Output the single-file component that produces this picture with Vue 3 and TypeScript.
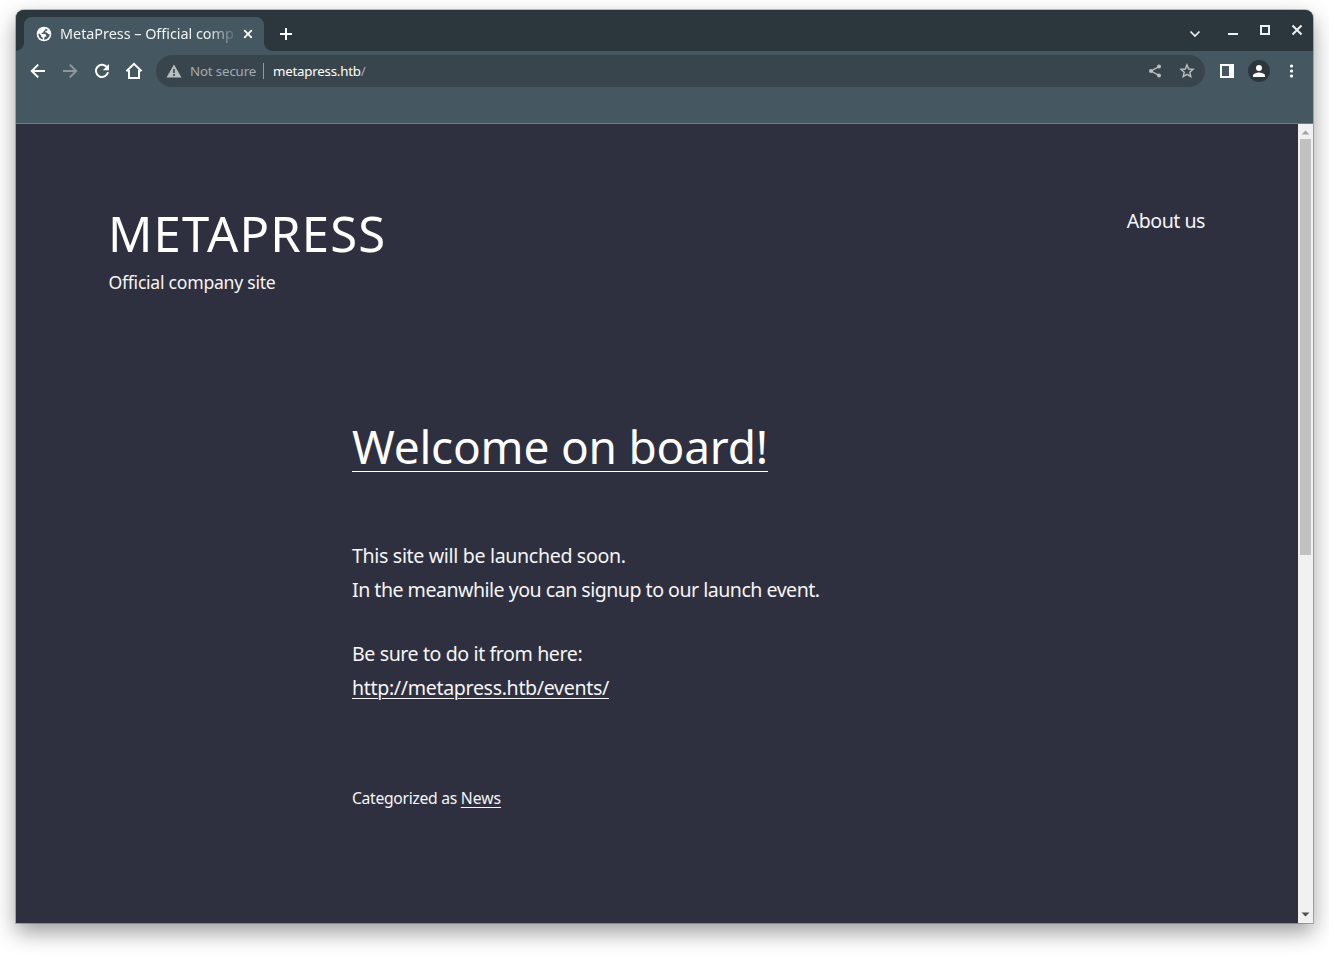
<script setup lang="ts">
import { ref } from 'vue'

const tabTitle = ref('MetaPress – Official comp')
</script>

<template>
  <div class="desktop">
    <div class="window">
      <header class="tabs">
        <div class="tab">
          <svg class="globe" width="16" height="16" viewBox="0 0 16 16">
            <circle cx="8" cy="8" r="7.3" fill="#fff" />
            <path d="M9.4 2.4V3.9L7.6 4.9V6.3L5.6 6.9V8.1H9.2L10.2 9.3V10.7H8.6L8 13.7C11 13.7 13.7 11.2 13.7 8L12.4 8.2 10.8 6.5H9.4V5.1L11.4 4.6V3.6ZM2.3 7.8C2.3 10.9 4 12.9 6.8 13.6V11.8L5.2 10.8V9.4L3.2 7.6Z" fill="#455760" />
          </svg>
          <span class="tab-title">{{ tabTitle }}</span>
          <svg class="tab-close" width="10" height="10" viewBox="0 0 10 10"><path d="M1.2 1.2 8.8 8.8M8.8 1.2 1.2 8.8" stroke="#fff" stroke-width="1.8" /></svg>
        </div>
        <svg class="plus" width="12" height="12" viewBox="0 0 12 12"><path d="M6 0V12M0 6H12" stroke="#fff" stroke-width="2" /></svg>
        <div class="controls">
          <svg width="12" height="12" viewBox="0 0 12 12"><path d="M1.5 4.5 6 9 10.5 4.5" fill="none" stroke="#eef1f1" stroke-width="1.7" /></svg>
          <svg class="c-min" width="12" height="12" viewBox="0 0 12 12"><path d="M1 10H11" stroke="#eef1f1" stroke-width="2" /></svg>
          <svg width="12" height="12" viewBox="0 0 12 12"><rect x="2" y="2" width="8" height="8" fill="none" stroke="#eef1f1" stroke-width="2" /></svg>
          <svg width="12" height="12" viewBox="0 0 12 12"><path d="M1.5 1.5 10.5 10.5M10.5 1.5 1.5 10.5" stroke="#eef1f1" stroke-width="2" /></svg>
        </div>
      </header>

      <nav class="toolbar">
        <svg width="16" height="16" viewBox="0 0 16 16"><path d="M15 8H2.5M8.2 1.6 1.8 8 8.2 14.4" fill="none" stroke="#fff" stroke-width="2" /></svg>
        <svg width="16" height="16" viewBox="0 0 16 16"><path d="M1 8H13.5M7.8 1.6 14.2 8 7.8 14.4" fill="none" stroke="#8d989d" stroke-width="2" /></svg>
        <svg width="16" height="16" viewBox="0 0 16 16"><path d="M13.2 4.6A6.1 6.1 0 1 0 14 9.3" fill="none" stroke="#fff" stroke-width="2" /><path d="M15 1V7.2H8.8Z" fill="#fff" /></svg>
        <svg class="home" width="18" height="18" viewBox="0 0 18 18"><path d="M1.4 9.3 9 1.9 16.6 9.3M4 8V16H14V8" fill="none" stroke="#fff" stroke-width="2" /></svg>
        <div class="omnibox">
          <svg width="16" height="14" viewBox="0 0 16 14"><path d="M8 0.5 15.5 13.5H0.5Z" fill="#b9bec0" /><path d="M8 5V9M8 10V12" stroke="#39454c" stroke-width="1.6" /></svg>
          <span class="insecure">Not secure</span>
          <span class="divider"></span>
          <span class="url">metapress.htb<i>/</i></span>
          <svg class="share" width="14" height="14" viewBox="0 0 14 14"><path d="M11 2.6 3 7 11 11.4" fill="none" stroke="#bdbfc0" stroke-width="1.3" /><circle cx="11" cy="2.5" r="2" fill="#bdbfc0" /><circle cx="3" cy="7" r="2" fill="#bdbfc0" /><circle cx="11" cy="11.5" r="2" fill="#bdbfc0" /></svg>
          <svg class="star" width="16" height="16" viewBox="0 0 16 16"><path d="M8 1.9 9.7 6 14.1 6.4 10.8 9.3 11.8 13.6 8 11.3 4.2 13.6 5.2 9.3 1.9 6.4 6.3 6Z" fill="none" stroke="#bdbfc0" stroke-width="1.4" /></svg>
        </div>
        <svg class="panel" width="14" height="14" viewBox="0 0 14 14"><path d="M0 0H14V14H0ZM2 2V12H9V2Z" fill="#fff" fill-rule="evenodd" /></svg>
        <svg class="avatar" width="22" height="22" viewBox="0 0 22 22"><circle cx="11" cy="11" r="11" fill="#2c373d" /><circle cx="11" cy="8" r="3" fill="#fff" /><path d="M5 17V15.5C5 13.3 9 12.4 11 12.4S17 13.3 17 15.5V17Z" fill="#fff" /></svg>
        <svg class="dots" width="4" height="14" viewBox="0 0 4 14"><circle cx="2.5" cy="2" r="1.6" fill="#fff" /><circle cx="2.5" cy="7" r="1.6" fill="#fff" /><circle cx="2.5" cy="12" r="1.6" fill="#fff" /></svg>
      </nav>

      <div class="viewport">
        <div class="page">
          <div class="site-header">
            <div>
              <h1>METAPRESS</h1>
              <p class="tagline">Official company site</p>
            </div>
            <a class="about">About us</a>
          </div>
          <article>
            <h2><a>Welcome on board!</a></h2>
            <p class="copy intro">
              <span class="launch">This site will be launched soon.</span><br /><span class="signup">In the meanwhile you can signup to our launch event.</span>
            </p>
            <p class="copy"><span class="sure">Be sure to do it from here:</span><br /><a class="link">http://metapress.htb/events/</a></p>
            <p class="category"><span>Categorized as </span><a>News</a></p>
          </article>
        </div>
        <div class="scrollbar">
          <svg width="9" height="5" viewBox="0 0 9 5"><path d="M4.5 0.5 8.5 4.5H0.5Z" fill="#a3a3a3" /></svg>
          <div class="thumb"></div>
          <svg class="down" width="9" height="5" viewBox="0 0 9 5"><path d="M0.5 0.5H8.5L4.5 4.5Z" fill="#505050" /></svg>
        </div>
      </div>
    </div>
  </div>
</template>

<style>
body { background: #fff; overflow: hidden; }
</style>

<style scoped>
* { box-sizing: border-box; }
.desktop { width: 1329px; height: 955px; padding: 10px 16px 32px; background: #fff; font-family: "Noto Sans", sans-serif; overflow: hidden; }
.window { height: 913px; display: flex; flex-direction: column; border-radius: 8px 8px 0 0; background: #455760; box-shadow: 0 0 0 1px rgba(0,0,0,.23), 0 9px 22px rgba(0,0,0,.4); }
svg { display: block; flex: none; }
.tabs { height: 41px; display: flex; align-items: flex-start; padding-left: 8px; background: #2c373d; border-radius: 8px 8px 0 0; }
.tab { position: relative; display: flex; align-items: center; width: 240px; height: 34px; margin-top: 7px; padding-left: 12px; background: #455760; border-radius: 8px 8px 0 0; }
.tab::before, .tab::after { content: ""; position: absolute; bottom: 0; width: 8px; height: 8px; }
.tab::before { left: -8px; background: radial-gradient(circle at 0 0, transparent 7.5px, #455760 8px); }
.tab::after { right: -8px; background: radial-gradient(circle at 100% 0, transparent 7.5px, #455760 8px); }
.tab-title { width: 175px; margin-left: 8px; white-space: nowrap; color: #f1f3f3; font-size: 14.4px; line-height: 20px; letter-spacing: -.02px; -webkit-mask-image: linear-gradient(90deg, #000 148px, transparent 178px); mask-image: linear-gradient(90deg, #000 148px, transparent 178px); }
.tab-close { margin-left: 8px; }
.plus { margin: 18px 0 0 16px; }
.controls { display: flex; gap: 20px; margin: 14px 10px 0 auto; }
.controls svg:first-child { margin-top: 3px; }
.c-min { margin-left: 6px; }
.toolbar { height: 73px; display: flex; align-items: flex-start; padding: 4px 0 0 14px; border-bottom: 1px solid #717e88; }
.toolbar > svg { margin: 8px 16px 0 0; }
.toolbar > .home { margin: 7px 13px 0 -1px; }
.omnibox { display: flex; align-items: center; width: 1049px; height: 32px; padding-left: 10px; border-radius: 16px; background: #39454c; font-size: 13.3px; line-height: 18px; }
.insecure { width: 66px; margin-left: 8px; color: #a5acaf; white-space: nowrap; letter-spacing: -.15px; }
.divider { width: 1px; height: 16px; margin: 0 9px 0 7px; background: #929a9e; }
.url { color: #fff; letter-spacing: -.22px; }
.url i { font-style: normal; color: #a5acaf; }
.share { margin-left: auto; }
.star { margin: 0 10px 0 17px; }
.toolbar > .panel { margin: 9px 14px 0 15px; }
.toolbar > .avatar { margin: 5px 20px 0 0; }
.toolbar > .dots { margin: 9px 0 0 -1px; }
.viewport { display: flex; height: 799px; }
.page { width: 1282px; background: #2f303f; color: #f5f5f7; }
h1, h2, p { margin: 0; font-weight: 400; white-space: nowrap; }
.site-header { display: flex; justify-content: space-between; padding: 77px 93px 0 93px; }
h1 { margin-left: -1px; height: 62px; font-size: 49px; line-height: 64px; letter-spacing: 1.15px; color: #fff; }
.tagline { margin-top: 4px; margin-left: -.5px; font-size: 17.6px; line-height: 30px; letter-spacing: -.25px; }
.about { margin-top: 3px; font-size: 19.6px; line-height: 34px; letter-spacing: -.5px; }
article { margin: 118px 0 0 336px; }
h2 { font-size: 46px; line-height: 62px; letter-spacing: -.2px; color: #fff; }
article a { text-decoration: underline; text-decoration-thickness: 1px; text-underline-offset: 3px; }
h2 a { text-underline-offset: 7px; }
.copy { font-size: 19.6px; line-height: 34px; }
.intro { margin: 62px 0 30px; }
.launch { letter-spacing: -.34px; }
.signup { letter-spacing: -.51px; }
.sure { letter-spacing: -.41px; }
.link { letter-spacing: -.34px; }
.category { margin-top: 79px; font-size: 15.7px; line-height: 28px; }
.category span { letter-spacing: -.3px; }
.scrollbar { display: flex; flex-direction: column; align-items: center; width: 15px; padding-top: 6px; background: #f1f1f1; }
.thumb { width: 11px; height: 416px; margin-top: 4px; background: #c1c1c1; }
.down { margin-top: auto; margin-bottom: 6px; }
</style>
